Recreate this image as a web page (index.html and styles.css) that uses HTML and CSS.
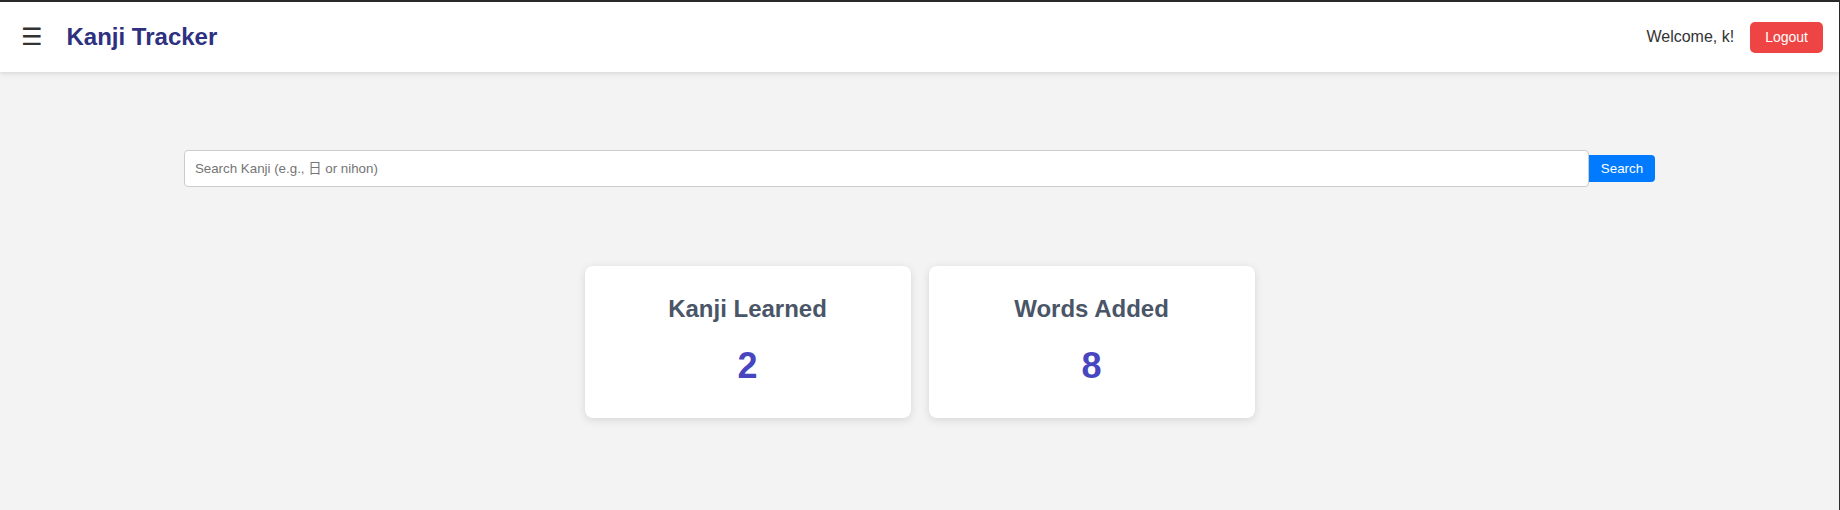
FILE: index.html
```html
<!DOCTYPE html>
<html lang="en">
<head>
<meta charset="utf-8">
<title>Kanji Tracker</title>
<link rel="stylesheet" href="styles.css">
</head>
<body>
<div class="app">
  <header class="topbar">
    <div class="brand">
      <button class="menu-btn" type="button" aria-label="Menu">☰</button>
      <h1 class="title">Kanji Tracker</h1>
    </div>
    <div class="user">
      <span class="welcome">Welcome, k!</span>
      <button class="logout" type="button">Logout</button>
    </div>
  </header>
  <main class="main">
    <form class="search">
      <input class="search-input" type="text" placeholder="Search Kanji (e.g., 日 or nihon)">
      <button class="search-btn" type="button">Search</button>
    </form>
    <section class="stats">
      <div class="card">
        <h2 class="card-title">Kanji Learned</h2>
        <p class="card-num">2</p>
      </div>
      <div class="card">
        <h2 class="card-title">Words Added</h2>
        <p class="card-num">8</p>
      </div>
    </section>
  </main>
</div>
</body>
</html>
```
FILE: styles.css
```css
* { box-sizing: border-box; }
html, body { margin: 0; padding: 0; }
body {
  font-family: "Liberation Sans", Arial, "Noto Sans CJK JP", sans-serif;
  background: #2b2b2e;
}
.app {
  width: 1840px;
  min-height: 510px;
  border-top: 2px solid #2b2b2e;
  border-right: 1px solid #2b2b2e;
  background: #f3f3f3;
}
.topbar {
  height: 70px;
  background: #fff;
  display: flex;
  align-items: center;
  justify-content: space-between;
  padding: 0 16px 0 21px;
  box-shadow: 0 2px 4px rgba(0,0,0,0.1);
  position: relative;
}
.brand { display: flex; align-items: center; gap: 24px; }
.menu-btn {
  background: none;
  border: none;
  padding: 0;
  font-family: "DejaVu Sans", sans-serif;
  font-size: 24px;
  line-height: 1;
  color: #333;
  cursor: pointer;
}
.title {
  margin: 0;
  font-size: 24px;
  font-weight: bold;
  color: #2e3080;
}
.user { display: flex; align-items: center; gap: 16px; }
.welcome { font-size: 16px; color: #333; }
.logout {
  height: 31px;
  padding: 0 15px;
  border: none;
  border-radius: 5px;
  background: #ef4444;
  color: #fff;
  font-family: "Liberation Sans", Arial, sans-serif;
  font-size: 14px;
}
.main {
  display: flex;
  flex-direction: column;
  align-items: center;
  padding-top: 78px;
}
.search {
  width: 80%;
  display: flex;
  align-items: center;
  margin: 0;
}
.search-input {
  flex: 1;
  height: 37px;
  padding: 10px;
  border: 1px solid #ccc;
  border-radius: 4px;
  font-family: "Liberation Sans", Arial, "Noto Sans CJK JP", sans-serif;
  font-size: 13.33px;
  background: #fff;
}
.search-input::placeholder { color: #757575; }
.search-btn {
  height: 27px;
  padding: 0 12px;
  border: none;
  border-radius: 0 4px 4px 0;
  background: #007bff;
  color: #fff;
  font-family: "Liberation Sans", Arial, sans-serif;
  font-size: 13.33px;
}
.stats {
  display: flex;
  gap: 18px;
  margin-top: 79px;
}
.card {
  width: 326px;
  height: 152px;
  background: #fff;
  border-radius: 8px;
  box-shadow: 0 2px 8px rgba(0,0,0,0.12);
  padding: 29px 24px 0;
  text-align: center;
}
.card-title {
  margin: 0 0 22px;
  font-size: 24px;
  font-weight: bold;
  color: #4a5568;
}
.card-num {
  margin: 0;
  font-size: 36px;
  font-weight: bold;
  color: #4845c0;
}
```
